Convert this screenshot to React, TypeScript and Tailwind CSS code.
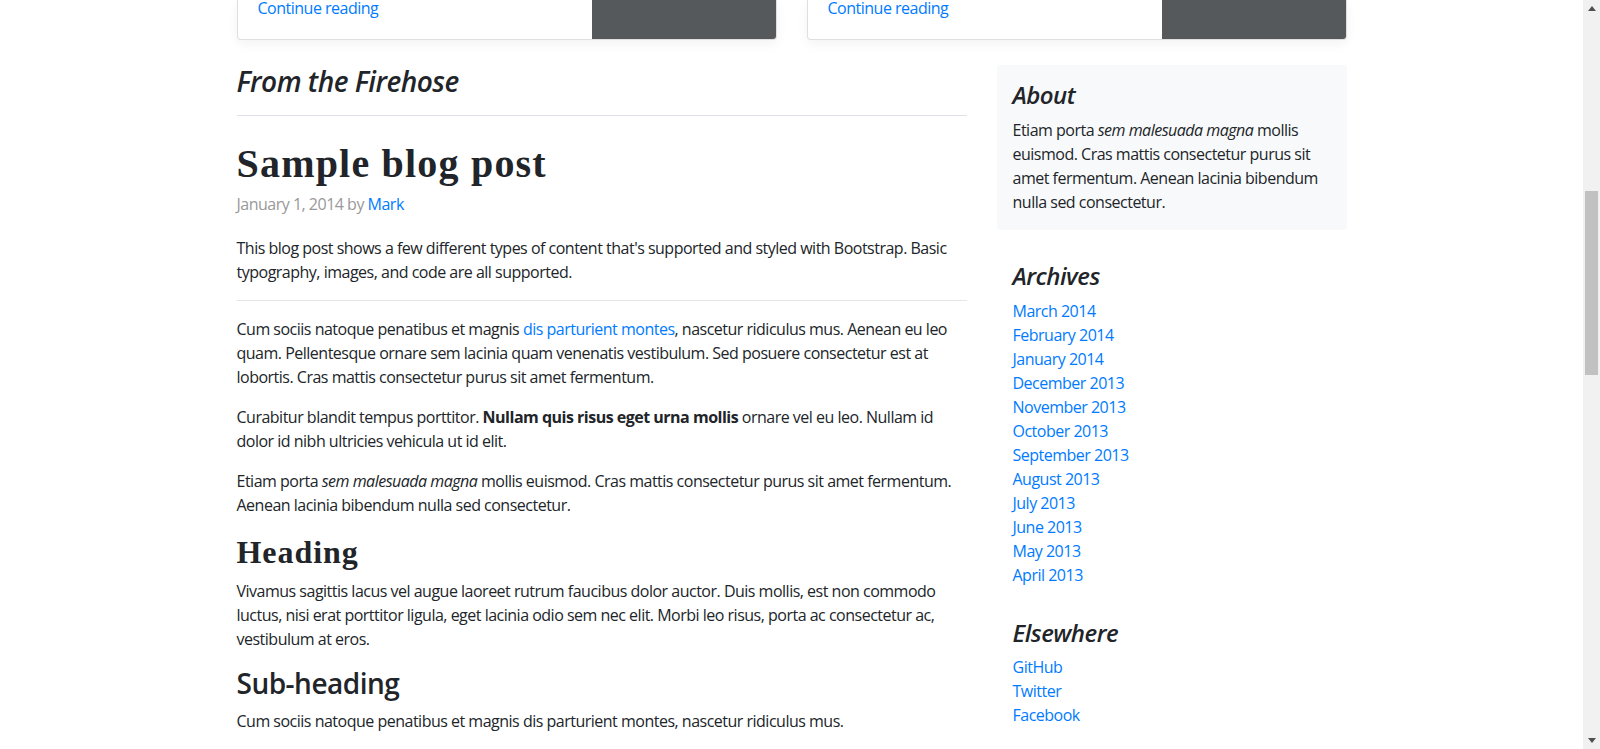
const archives = [
  "March 2014",
  "February 2014",
  "January 2014",
  "December 2013",
  "November 2013",
  "October 2013",
  "September 2013",
  "August 2013",
  "July 2013",
  "June 2013",
  "May 2013",
  "April 2013",
];

const elsewhere = ["GitHub", "Twitter", "Facebook"];

function CardStub() {
  return (
    <div className="flex h-[40px] overflow-hidden rounded-b border border-t-0 border-black/[0.125] bg-white shadow-[0_4px_12px_rgba(0,0,0,0.05)]">
      <div className="flex flex-1 items-end px-5 pb-[19px]">
        <a href="#" className="leading-6 text-[#007bff]">
          Continue reading
        </a>
      </div>
      <div className="w-[184px] bg-[#55595c]" />
    </div>
  );
}

function Scrollbar() {
  return (
    <div className="flex w-[17px] shrink-0 flex-col bg-[#f1f1f1]">
      <div className="flex h-[17px] items-center justify-center">
        <svg width="8" height="5" viewBox="0 0 8 5">
          <path d="M0 5 L4 0 L8 5 Z" fill="#505050" />
        </svg>
      </div>
      <div className="mx-[2px] mt-[174px] h-[184px] bg-[#c1c1c1]" />
      <div className="flex-1" />
      <div className="flex h-[17px] items-center justify-center">
        <svg width="8" height="5" viewBox="0 0 8 5">
          <path d="M0 0 L8 0 L4 5 Z" fill="#505050" />
        </svg>
      </div>
    </div>
  );
}

export default function App() {
  const serif = "font-['Liberation_Serif',Georgia,serif] font-bold tracking-[0.03em]";
  return (
    <div className="flex h-[749px] overflow-hidden bg-white font-['Open_Sans',sans-serif] text-base leading-6 tracking-[-0.5px] text-[#212529]">
      <div className="flex-1 overflow-hidden">
        <div className="mx-auto w-[1110px]">
          <div className="grid grid-cols-2 gap-[30px]">
            <CardStub />
            <CardStub />
          </div>

          <div className="mt-[25px] grid grid-cols-[730px_350px] gap-[30px]">
            <main>
              <h3 className="mb-6 border-b border-[#dee2e6] pb-4 text-[28px] font-semibold italic leading-[1.2]">
                From the Firehose
              </h3>

              <article>
                <h2 className={`${serif} mb-1 text-[40px] leading-[1.2]`}>Sample blog post</h2>
                <p className="mb-5 text-[#999]">
                  January 1, 2014 by{" "}
                  <a href="#" className="text-[#007bff]">
                    Mark
                  </a>
                </p>

                <p className="mb-4">
                  This blog post shows a few different types of content that's supported and styled with
                  Bootstrap. Basic typography, images, and code are all supported.
                </p>
                <hr className="mb-4 border-t border-black/10" />

                <p className="mb-4">
                  Cum sociis natoque penatibus et magnis{" "}
                  <a href="#" className="text-[#007bff]">
                    dis parturient montes
                  </a>
                  , nascetur ridiculus mus. Aenean eu leo quam. Pellentesque ornare sem lacinia quam venenatis
                  vestibulum. Sed posuere consectetur est at lobortis. Cras mattis consectetur purus sit amet
                  fermentum.
                </p>
                <p className="mb-4">
                  Curabitur blandit tempus porttitor. <strong className="font-bold">Nullam quis risus eget urna mollis</strong>{" "}
                  ornare vel eu leo. Nullam id dolor id nibh ultricies vehicula ut id elit.
                </p>
                <p className="mb-4">
                  Etiam porta <em>sem malesuada magna</em> mollis euismod. Cras mattis consectetur purus sit amet
                  fermentum. Aenean lacinia bibendum nulla sed consectetur.
                </p>

                <h2 className={`${serif} mb-2 text-[32px] leading-[1.2]`}>Heading</h2>
                <p className="mb-4">
                  Vivamus sagittis lacus vel augue laoreet rutrum faucibus dolor auctor. Duis mollis, est non
                  commodo luctus, nisi erat porttitor ligula, eget lacinia odio sem nec elit. Morbi leo risus,
                  porta ac consectetur ac, vestibulum at eros.
                </p>

                <h3 className="mb-2 text-[28px] font-semibold leading-[1.2]">Sub-heading</h3>
                <p className="mb-4">
                  Cum sociis natoque penatibus et magnis dis parturient montes, nascetur ridiculus mus.
                </p>
              </article>
            </main>

            <aside>
              <div className="mb-4 rounded bg-[#f8f9fa] p-4">
                <h4 className="mb-2 text-2xl font-semibold italic leading-[1.2]">About</h4>
                <p>
                  Etiam porta <em>sem malesuada magna</em> mollis euismod. Cras mattis consectetur purus sit amet
                  fermentum. Aenean lacinia bibendum nulla sed consectetur.
                </p>
              </div>

              <div className="p-4">
                <h4 className="mb-2 text-2xl font-semibold italic leading-[1.2]">Archives</h4>
                <ol>
                  {archives.map((a) => (
                    <li key={a}>
                      <a href="#" className="text-[#007bff]">
                        {a}
                      </a>
                    </li>
                  ))}
                </ol>
              </div>

              <div className="p-4">
                <h4 className="mb-2 text-2xl font-semibold italic leading-[1.2]">Elsewhere</h4>
                <ol>
                  {elsewhere.map((a) => (
                    <li key={a}>
                      <a href="#" className="text-[#007bff]">
                        {a}
                      </a>
                    </li>
                  ))}
                </ol>
              </div>
            </aside>
          </div>
        </div>
      </div>
      <Scrollbar />
    </div>
  );
}
